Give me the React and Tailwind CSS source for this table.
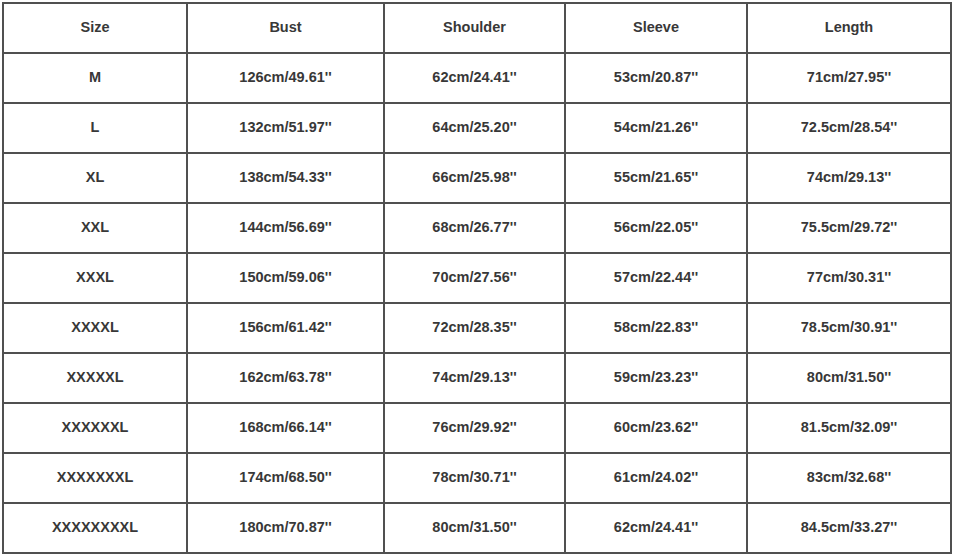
const header = ["Size", "Bust", "Shoulder", "Sleeve", "Length"];
const rows = [
  ["M", "126cm/49.61''", "62cm/24.41''", "53cm/20.87''", "71cm/27.95''"],
  ["L", "132cm/51.97''", "64cm/25.20''", "54cm/21.26''", "72.5cm/28.54''"],
  ["XL", "138cm/54.33''", "66cm/25.98''", "55cm/21.65''", "74cm/29.13''"],
  ["XXL", "144cm/56.69''", "68cm/26.77''", "56cm/22.05''", "75.5cm/29.72''"],
  ["XXXL", "150cm/59.06''", "70cm/27.56''", "57cm/22.44''", "77cm/30.31''"],
  ["XXXXL", "156cm/61.42''", "72cm/28.35''", "58cm/22.83''", "78.5cm/30.91''"],
  ["XXXXXL", "162cm/63.78''", "74cm/29.13''", "59cm/23.23''", "80cm/31.50''"],
  ["XXXXXXL", "168cm/66.14''", "76cm/29.92''", "60cm/23.62''", "81.5cm/32.09''"],
  ["XXXXXXXL", "174cm/68.50''", "78cm/30.71''", "61cm/24.02''", "83cm/32.68''"],
  ["XXXXXXXXL", "180cm/70.87''", "80cm/31.50''", "62cm/24.41''", "84.5cm/33.27''"],
];

export default function App() {
  const all = [header, ...rows];
  return (
    <div className="w-[954px] h-[556px] bg-white pt-[2px] pl-[2px]" style={{ fontFamily: '"Liberation Sans", Arial, sans-serif' }}>
      <div className="inline-grid grid-cols-[182px_195px_179px_180px_202px] auto-rows-[48px] gap-[2px] p-[2px] bg-[#505050]">
        {all.map((r, i) =>
          r.map((c, j) => (
            <div key={i + "-" + j} className="bg-white flex items-center justify-center pb-[1px] text-[14.5px] font-bold text-[#383838]">
              {c}
            </div>
          ))
        )}
      </div>
    </div>
  );
}
